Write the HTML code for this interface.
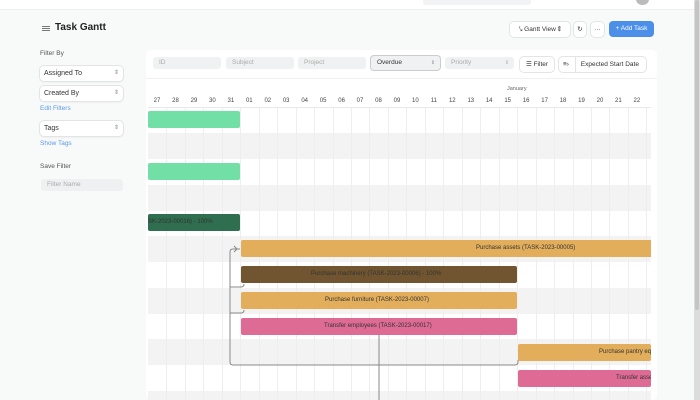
<!DOCTYPE html>
<html><head><style>
*{box-sizing:border-box;margin:0;padding:0}
html,body{width:700px;height:400px;overflow:hidden}
body{background:#f8f9f9;font-family:"Liberation Sans",sans-serif;color:#333;position:relative}
.a{position:absolute}
.sel{position:absolute;left:40px;width:83px;height:15px;background:#fff;border-radius:4px;box-shadow:0 0 0 1px #e2e4e6,0 1px 2px rgba(0,0,0,.08);font-size:7px;line-height:15px;padding-left:4px;color:#333}
.sel:after{content:"⇕";position:absolute;right:4px;font-size:6px;color:#888}
.lnk{position:absolute;left:40px;font-size:6.5px;color:#5a9be8}
.lbl{position:absolute;left:40px;font-size:6.5px;color:#555}
.inp{position:absolute;top:57px;height:12px;background:#f0f1f2;border-radius:3px;font-size:6.5px;line-height:12px;padding-left:6px;color:#aaa}
.btn{position:absolute;background:#fff;border-radius:4px;box-shadow:0 0 0 1px #e2e4e6;font-size:6.5px;line-height:15px;text-align:center;color:#333}
.row{position:absolute;left:148px;width:503px;height:26px}
.bar{position:absolute;height:17px;border-radius:2px;font-size:6px;line-height:17px;text-align:left;color:#333;white-space:nowrap;overflow:hidden}
.d{position:absolute;top:98px;font-size:6px;color:#444;width:18px;text-align:center}
.vl{position:absolute;top:108px;width:1px;height:292px;background:#eee}
</style></head><body>
<div class="a" style="left:0;top:0;width:700px;height:10px;background:#fff;border-bottom:1px solid #eceeef"></div>
<div class="a" style="left:423px;top:0;width:108px;height:5px;background:#f2f3f4;border-radius:0 0 3px 3px"></div>
<div class="a" style="left:636px;top:-6px;width:13px;height:11px;border-radius:50%;background:#bbb"></div>
<div class="a" style="left:694px;top:0;width:6px;height:400px;background:#dcdcdc"></div>
<div class="a" style="left:695px;top:0;width:4px;height:310px;background:#c4c4c4;border-radius:2px"></div>

<div class="a" style="left:42px;top:26px;width:8px;height:1px;background:#777;box-shadow:0 2px 0 #777,0 4px 0 #777"></div>
<div class="a" style="left:55px;top:22px;font-size:10px;font-weight:bold;color:#222">Task Gantt</div>

<div class="lbl" style="top:50px">Filter By</div>
<div class="sel" style="top:66px">Assigned To</div>
<div class="sel" style="top:86px">Created By</div>
<div class="lnk" style="top:105px">Edit Filters</div>
<div class="sel" style="top:121px">Tags</div>
<div class="lnk" style="top:140px">Show Tags</div>
<div class="lbl" style="top:163px">Save Filter</div>
<div class="a" style="left:41px;top:179px;width:82px;height:12px;background:#eef0f1;border-radius:3px;font-size:6.5px;line-height:12px;padding-left:6px;color:#aaa">Filter Name</div>

<div class="btn" style="left:510px;top:22px;width:60px">⤥ Gantt View ⇕</div>
<div class="btn" style="left:574px;top:22px;width:12px">↻</div>
<div class="btn" style="left:591px;top:22px;width:13px">···</div>
<div class="a" style="left:609px;top:21px;width:45px;height:16px;background:#4b8fe8;border-radius:4px;color:#fff;font-size:6.5px;line-height:16px;text-align:center">+ Add Task</div>

<div class="a" style="left:146px;top:50px;width:511px;height:350px;background:#fff;border-radius:5px"></div>
<div class="a" style="left:146px;top:78px;width:511px;height:1px;background:#eef0f1"></div>
<div class="inp" style="left:153px;width:68px">ID</div>
<div class="inp" style="left:226px;width:68px">Subject</div>
<div class="inp" style="left:298px;width:68px">Project</div>
<div class="a" style="left:371px;top:56px;width:69px;height:14px;background:#f0f1f2;border-radius:3px;box-shadow:0 0 0 1px #ccc;font-size:6.5px;line-height:14px;padding-left:6px;color:#333">Overdue<span style="position:absolute;right:5px;font-size:5px;color:#888">⇕</span></div>
<div class="inp" style="left:445px;width:69px">Priority<span style="position:absolute;right:5px;font-size:5px;color:#aaa">⇕</span></div>
<div class="btn" style="left:520px;top:57px;width:34px">☰ Filter</div>
<div class="btn" style="left:559px;top:57px;width:87px;text-align:left;padding-left:4px">≡› <span style="display:inline-block;border-left:1px solid #e2e4e6;padding-left:5px;margin-left:4px">Expected Start Date</span></div>

<div class="a" style="left:507px;top:86px;font-size:5.5px;color:#666">January</div>
<div class="d" style="left:148px">27</div><div class="d" style="left:166.5px">28</div><div class="d" style="left:185px">29</div><div class="d" style="left:203.4px">30</div><div class="d" style="left:221.9px">31</div><div class="d" style="left:240.3px">01</div><div class="d" style="left:258.8px">02</div><div class="d" style="left:277.2px">03</div><div class="d" style="left:295.7px">04</div><div class="d" style="left:314.1px">05</div><div class="d" style="left:332.6px">06</div><div class="d" style="left:351px">07</div><div class="d" style="left:369.5px">08</div><div class="d" style="left:388px">09</div><div class="d" style="left:406.4px">10</div><div class="d" style="left:424.9px">11</div><div class="d" style="left:443.3px">12</div><div class="d" style="left:461.8px">13</div><div class="d" style="left:480.2px">14</div><div class="d" style="left:498.7px">15</div><div class="d" style="left:517.1px">16</div><div class="d" style="left:535.6px">17</div><div class="d" style="left:554px">18</div><div class="d" style="left:572.5px">19</div><div class="d" style="left:591px">20</div><div class="d" style="left:609.4px">21</div><div class="d" style="left:627.9px">22</div>
<div class="a" style="left:148px;top:107px;width:503px;height:1px;background:#e8e8e8"></div>

<div class="row" style="top:133px;background:#f3f3f3"></div>
<div class="row" style="top:185px;background:#f3f3f3"></div>
<div class="row" style="top:236px;background:#f3f3f3"></div>
<div class="row" style="top:288px;background:#f3f3f3"></div>
<div class="row" style="top:339px;background:#f3f3f3"></div>
<div class="row" style="top:391px;height:9px;background:#f3f3f3"></div>

<div class="vl" style="left:166px"></div><div class="vl" style="left:185px"></div><div class="vl" style="left:203px"></div><div class="vl" style="left:222px"></div><div class="vl" style="left:240px"></div><div class="vl" style="left:259px"></div><div class="vl" style="left:277px"></div><div class="vl" style="left:296px"></div><div class="vl" style="left:314px"></div><div class="vl" style="left:333px"></div><div class="vl" style="left:351px"></div><div class="vl" style="left:369px"></div><div class="vl" style="left:388px"></div><div class="vl" style="left:406px"></div><div class="vl" style="left:425px"></div><div class="vl" style="left:443px"></div><div class="vl" style="left:462px"></div><div class="vl" style="left:480px"></div><div class="vl" style="left:499px"></div><div class="vl" style="left:517px"></div><div class="vl" style="left:536px"></div><div class="vl" style="left:554px"></div><div class="vl" style="left:573px"></div><div class="vl" style="left:591px"></div><div class="vl" style="left:609px"></div><div class="vl" style="left:628px"></div><div class="vl" style="left:646px"></div>

<div class="bar" style="left:148px;top:111px;width:92px;background:#72e0a6"></div>
<div class="bar" style="left:148px;top:163px;width:92px;background:#72e0a6"></div>
<div class="bar" style="left:148px;top:214px;width:92px;background:#2f6e4e">SK-2023-00016) - 100%</div>
<div class="bar" style="left:241px;top:240px;width:410px;background:#e2ae5c;border-radius:2px 0 0 2px;padding-left:235px">Purchase assets (TASK-2023-00005)</div>
<div class="bar" style="left:241px;top:266px;width:276px;background:#705530;padding-left:70px">Purchase machinery (TASK-2023-00006) - 100%</div>
<div class="bar" style="left:241px;top:292px;width:276px;background:#e2ae5c;padding-left:84px">Purchase furniture (TASK-2023-00007)</div>
<div class="bar" style="left:241px;top:318px;width:276px;background:#de6b94;padding-left:83px">Transfer employees (TASK-2023-00017)</div>
<div class="bar" style="left:518px;top:344px;width:133px;background:#e2ae5c;padding-left:81px">Purchase pantry eq</div>
<div class="bar" style="left:518px;top:370px;width:133px;background:#de6b94;padding-left:98px">Transfer asse</div>

<svg class="a" style="left:0;top:0" width="700" height="400">
<g fill="none" stroke="#888" stroke-width="1">
<path d="M240 249 H233 Q230 249 230 252 V362 Q230 365 233 365 H515 Q518 365 518 362 V360"/>
<path d="M230 287 H241 Q244 287 244 284"/>
<path d="M230 313 H241 Q244 313 244 310"/>
<path d="M234 246 L237 249 L234 252"/>
<path d="M379 335 V400"/>
</g></svg>
</body></html>
